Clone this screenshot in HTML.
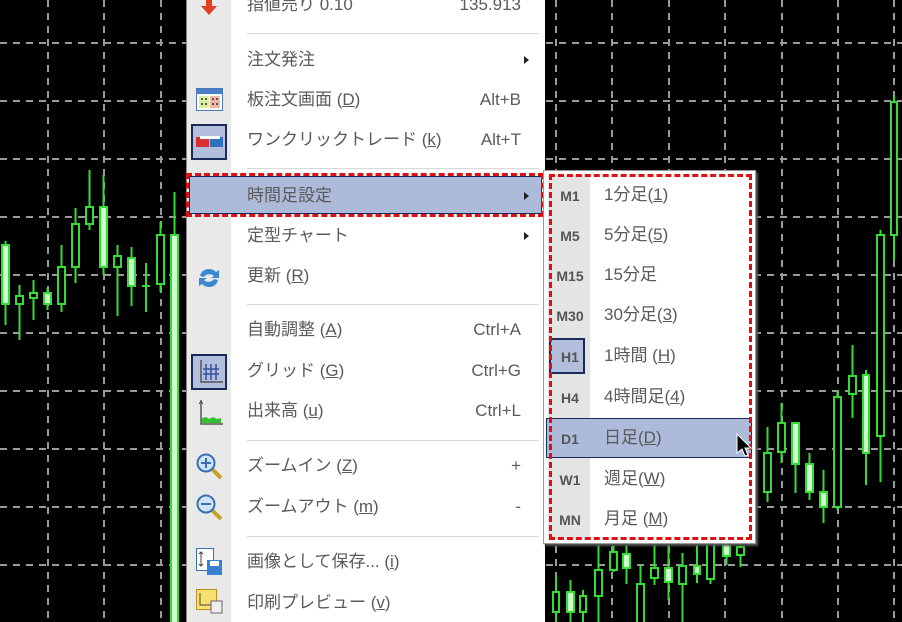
<!DOCTYPE html>
<html><head><meta charset="utf-8"><style>
*{margin:0;padding:0;box-sizing:border-box}
html{width:902px;height:622px;overflow:hidden}
body{width:902px;height:622px;background:#000;position:relative;overflow:hidden;font-family:"Liberation Sans","Noto Sans CJK JP",sans-serif}
.menu{position:absolute;left:186px;top:-10px;width:359px;height:632px;background:#fff;border-left:1px solid #888}
.icol{position:absolute;left:0;top:0;width:44px;height:100%;background:#e9e9e9}
.it{position:absolute;left:60px;font-size:17px;color:#5a5a5a;line-height:20px;white-space:nowrap}
.sc{position:absolute;right:24px;font-size:17px;color:#5a5a5a;line-height:20px}
.ar{position:absolute;right:16px;width:0;height:0;border-top:4px solid transparent;border-bottom:4px solid transparent;border-left:5px solid #222}
.sep{position:absolute;left:60px;right:6px;height:1px;background:#d8d8d8}
u{text-decoration:underline}
.sub{position:absolute;left:543px;top:170px;width:213px;height:374px;background:#fff;border:1px solid #999;box-shadow:2px 2px 2px #555}
.scol{position:absolute;left:4px;top:4px;width:42px;height:364px;background:#e4e4e4}
.lab{position:absolute;left:6px;width:40px;text-align:center;font-size:14px;font-weight:bold;color:#555}
.st{position:absolute;left:60px;font-size:17px;color:#5a5a5a;line-height:20px;white-space:nowrap}
</style></head><body>
<svg width="902" height="622" style="position:absolute;left:0;top:0">
<g stroke="#9a9a9a" stroke-width="2" stroke-dasharray="7,6">
<line x1="0" y1="43" x2="902" y2="43"/><line x1="0" y1="101" x2="902" y2="101"/><line x1="0" y1="159" x2="902" y2="159"/><line x1="0" y1="217" x2="902" y2="217"/><line x1="0" y1="275" x2="902" y2="275"/><line x1="0" y1="333" x2="902" y2="333"/><line x1="0" y1="391" x2="902" y2="391"/><line x1="0" y1="449" x2="902" y2="449"/><line x1="0" y1="507" x2="902" y2="507"/><line x1="0" y1="565" x2="902" y2="565"/>
<line x1="48" y1="0" x2="48" y2="622"/><line x1="104" y1="0" x2="104" y2="622"/><line x1="161" y1="0" x2="161" y2="622"/><line x1="556" y1="0" x2="556" y2="622"/><line x1="612" y1="0" x2="612" y2="622"/><line x1="669" y1="0" x2="669" y2="622"/><line x1="725" y1="0" x2="725" y2="622"/><line x1="782" y1="0" x2="782" y2="622"/><line x1="838" y1="0" x2="838" y2="622"/><line x1="894" y1="0" x2="894" y2="622"/>
</g>
<g stroke="#33dd33" stroke-width="2">
<line x1="5.5" y1="241" x2="5.5" y2="325"/><rect x="2" y="245" width="7" height="59" fill="#ccffcc"/>
<line x1="19.5" y1="285" x2="19.5" y2="340"/><rect x="16" y="296" width="7" height="8" fill="#000"/>
<line x1="33.5" y1="280" x2="33.5" y2="320"/><rect x="30" y="293" width="7" height="5" fill="#000"/>
<line x1="47.5" y1="288" x2="47.5" y2="310"/><rect x="44" y="293" width="7" height="11" fill="#ccffcc"/>
<line x1="61.5" y1="245" x2="61.5" y2="312"/><rect x="58" y="267" width="7" height="37" fill="#000"/>
<line x1="75.5" y1="208" x2="75.5" y2="283"/><rect x="72" y="224" width="7" height="43" fill="#000"/>
<line x1="89.5" y1="170" x2="89.5" y2="230"/><rect x="86" y="207" width="7" height="17" fill="#000"/>
<line x1="103.5" y1="175" x2="103.5" y2="275"/><rect x="100" y="207" width="7" height="60" fill="#ccffcc"/>
<line x1="117.5" y1="245" x2="117.5" y2="316"/><rect x="114" y="256" width="7" height="11" fill="#000"/>
<line x1="131.5" y1="247" x2="131.5" y2="306"/><rect x="128" y="258" width="7" height="28" fill="#ccffcc"/>
<line x1="146" y1="263" x2="146" y2="312"/><line x1="142" y1="286" x2="150" y2="286"/>
<line x1="160.5" y1="222" x2="160.5" y2="292"/><rect x="157" y="235" width="7" height="49" fill="#000"/>
<line x1="174.5" y1="192" x2="174.5" y2="622"/><rect x="171" y="235" width="7" height="400" fill="#ccffcc"/>
<line x1="767.5" y1="427" x2="767.5" y2="502"/><rect x="764" y="453" width="7" height="39" fill="#000"/>
<line x1="781.5" y1="403" x2="781.5" y2="463"/><rect x="778" y="423" width="7" height="29" fill="#000"/>
<line x1="795.5" y1="423" x2="795.5" y2="493"/><rect x="792" y="423" width="7" height="41" fill="#ccffcc"/>
<line x1="809.5" y1="453" x2="809.5" y2="500"/><rect x="806" y="464" width="7" height="28" fill="#ccffcc"/>
<line x1="823.5" y1="470" x2="823.5" y2="523"/><rect x="820" y="492" width="7" height="15" fill="#ccffcc"/>
<line x1="837.5" y1="390" x2="837.5" y2="510"/><rect x="834" y="397" width="7" height="110" fill="#000"/>
<line x1="852.5" y1="345" x2="852.5" y2="418"/><rect x="849" y="376" width="7" height="18" fill="#000"/>
<line x1="866" y1="370" x2="866" y2="485"/><rect x="863" y="375" width="6" height="78" fill="#ccffcc"/>
<line x1="880.5" y1="230" x2="880.5" y2="482"/><rect x="877" y="235" width="7" height="201" fill="#000"/>
<line x1="894" y1="95" x2="894" y2="260"/><rect x="891" y="102" width="6" height="133" fill="#000"/>
<line x1="556" y1="575" x2="556" y2="622"/><rect x="553" y="592" width="6" height="20" fill="#000"/>
<line x1="570.5" y1="580" x2="570.5" y2="622"/><rect x="567" y="592" width="7" height="20" fill="#ccffcc"/>
<line x1="583" y1="590" x2="583" y2="622"/><rect x="580" y="596" width="6" height="16" fill="#000"/>
<line x1="598.5" y1="545" x2="598.5" y2="622"/><rect x="595" y="570" width="7" height="26" fill="#000"/>
<line x1="613.5" y1="545" x2="613.5" y2="572"/><rect x="610" y="552" width="7" height="18" fill="#000"/>
<line x1="626.5" y1="545" x2="626.5" y2="584"/><rect x="623" y="554" width="7" height="14" fill="#ccffcc"/>
<line x1="640.5" y1="565" x2="640.5" y2="622"/><rect x="637" y="584" width="7" height="40" fill="#000"/>
<line x1="654.5" y1="545" x2="654.5" y2="585"/><rect x="651" y="568" width="7" height="10" fill="#000"/>
<line x1="668.5" y1="545" x2="668.5" y2="600"/><rect x="665" y="568" width="7" height="14" fill="#ccffcc"/>
<line x1="682.5" y1="553" x2="682.5" y2="622"/><rect x="679" y="566" width="7" height="18" fill="#000"/>
<line x1="697" y1="545" x2="697" y2="583"/><rect x="694" y="566" width="6" height="8" fill="#ccffcc"/>
<line x1="710.5" y1="545" x2="710.5" y2="584"/><rect x="707" y="540" width="7" height="39" fill="#000"/>
<line x1="726.5" y1="545" x2="726.5" y2="565"/><rect x="723" y="540" width="7" height="16" fill="#ccffcc"/>
<line x1="740.5" y1="545" x2="740.5" y2="567"/><rect x="737" y="547" width="7" height="8" fill="#000"/>
</g>
</svg>

<div class="menu">
<div class="icol"></div>
<svg style="position:absolute;left:12px;top:10px" width="20" height="16"><path d="M7 0h6v6h5l-8 9l-8-9h5z" fill="#e04020"/></svg>
<div class="it" style="top:5px">指値売り 0.10</div><div class="sc" style="top:5px">135.913</div>
<div class="sep" style="top:43px"></div>
<div class="it" style="top:60px">注文発注</div><div class="ar" style="top:66px"></div>
<svg style="position:absolute;left:9px;top:98px" width="27" height="24"><rect x="0.5" y="0.5" width="26" height="22" fill="#fff" stroke="#4a7ab8"/><rect x="1" y="1" width="25" height="5" fill="#4a80c8"/><rect x="3" y="8" width="10" height="12" fill="#d8f0a0"/><rect x="14" y="8" width="10" height="12" fill="#f0b8a8"/><g fill="#555"><rect x="5" y="10" width="2" height="2"/><rect x="9" y="10" width="2" height="2"/><rect x="5" y="15" width="2" height="2"/><rect x="9" y="15" width="2" height="2"/><rect x="16" y="10" width="2" height="2"/><rect x="20" y="10" width="2" height="2"/><rect x="16" y="15" width="2" height="2"/><rect x="20" y="15" width="2" height="2"/></g></svg>
<div class="it" style="top:100px">板注文画面 (<u>D</u>)</div><div class="sc" style="top:100px">Alt+B</div>
<div style="position:absolute;left:4px;top:134px;width:36px;height:36px;background:#b3bedc;border:2px solid #1a2a5a"></div>
<svg style="position:absolute;left:9px;top:144px" width="27" height="14"><rect x="0" y="3" width="13" height="10" fill="#d83030"/><rect x="14" y="3" width="13" height="10" fill="#3070c0"/><rect x="4" y="2" width="20" height="3" fill="#fff"/></svg>
<div class="it" style="top:140px">ワンクリックトレード (<u>k</u>)</div><div class="sc" style="top:140px">Alt+T</div>
<div class="sep" style="top:178px"></div>
<div style="position:absolute;left:2px;top:186px;width:353px;height:38px;background:#aebad9;border:1px solid #1a2a5a"></div>
<div style="position:absolute;left:-1px;top:183px;width:358px;height:44px;border:3px dashed #dd1111"></div>
<div class="it" style="top:196px">時間足設定</div><div class="ar" style="top:202px"></div>
<div class="it" style="top:236px">定型チャート</div><div class="ar" style="top:242px"></div>
<svg style="position:absolute;left:9px;top:275px" width="26" height="26"><path d="M4 11a9 8 0 0 1 16-4l3-2v8h-8l3-2a6 5 0 0 0-10 1z" fill="#3a88d0"/><path d="M22 15a9 8 0 0 1-16 4l-3 2v-8h8l-3 2a6 5 0 0 0 10-1z" fill="#3a88d0"/></svg>
<div class="it" style="top:276px">更新 (<u>R</u>)</div>
<div class="sep" style="top:314px"></div>
<div class="it" style="top:330px">自動調整 (<u>A</u>)</div><div class="sc" style="top:330px">Ctrl+A</div>
<div style="position:absolute;left:4px;top:364px;width:36px;height:36px;background:#b3bedc;border:2px solid #1a2a5a"></div>
<svg style="position:absolute;left:10px;top:370px" width="26" height="26" stroke="#555" stroke-width="1.5" fill="none"><path d="M4 0v22h22"/><path d="M9 4v16M14 4v16M19 4v16M6 9h16M6 14h16" stroke="#3050a0"/></svg>
<div class="it" style="top:371px">グリッド (<u>G</u>)</div><div class="sc" style="top:371px">Ctrl+G</div>
<svg style="position:absolute;left:9px;top:410px" width="28" height="26"><path d="M5 0v24h22" stroke="#555" stroke-width="1.5" fill="none"/><path d="M3 4l2-3l2 3" stroke="#555" fill="none"/><path d="M6 23v-5l4-1l3 2l4-2l4 2l4-1v5z" fill="#30c030"/></svg>
<div class="it" style="top:411px">出来高 (<u>u</u>)</div><div class="sc" style="top:411px">Ctrl+L</div>
<div class="sep" style="top:450px"></div>
<svg style="position:absolute;left:8px;top:462px" width="30" height="30"><path d="M17 17l9 9" stroke="#c8a020" stroke-width="4"/><circle cx="11" cy="11" r="8.5" fill="#cfe4f8" stroke="#3a70b0" stroke-width="2"/><path d="M6 11h10M11 6v10" stroke="#3a70b0" stroke-width="2"/></svg>
<div class="it" style="top:466px">ズームイン (<u>Z</u>)</div><div class="sc" style="top:466px">+</div>
<svg style="position:absolute;left:8px;top:503px" width="30" height="30"><path d="M17 17l9 9" stroke="#c8a020" stroke-width="4"/><circle cx="11" cy="11" r="8.5" fill="#cfe4f8" stroke="#3a70b0" stroke-width="2"/><path d="M6 11h10" stroke="#3a70b0" stroke-width="2"/></svg>
<div class="it" style="top:507px">ズームアウト (<u>m</u>)</div><div class="sc" style="top:507px">-</div>
<div class="sep" style="top:546px"></div>
<svg style="position:absolute;left:9px;top:558px" width="30" height="30"><rect x="0.5" y="0.5" width="17" height="22" fill="#fff" stroke="#3a70b0"/><path d="M5 4v14M3 6l2-2l2 2M3 16l2 2l2-2" stroke="#444" fill="none"/><rect x="11" y="12" width="15" height="15" fill="#3a80d0"/><rect x="14" y="13" width="9" height="5" fill="#fff"/></svg>
<div class="it" style="top:562px">画像として保存... (<u>i</u>)</div>
<svg style="position:absolute;left:9px;top:599px" width="30" height="30"><rect x="0.5" y="0.5" width="20" height="20" fill="#f8e070" stroke="#b89020"/><path d="M4 4v12h12" stroke="#444" fill="none"/><rect x="15" y="12" width="11" height="12" fill="#eee" stroke="#666"/></svg>
<div class="it" style="top:603px">印刷プレビュー (<u>v</u>)</div>
</div>

<div class="sub">
<div class="scol"></div>
<div style="position:absolute;left:5px;top:167px;width:36px;height:36px;background:#b3bedc;border:2px solid #1a2a5a"></div>
<div style="position:absolute;left:2px;top:247px;width:206px;height:40px;background:#aebad9;border:1px solid #1a2a5a"></div>
<div style="position:absolute;left:5px;top:3px;width:203px;height:366px;border:3px dashed #dd1111"></div>
<div class="lab" style="top:17px">M1</div><div class="st" style="top:14px">1分足(<u>1</u>)</div>
<div class="lab" style="top:57px">M5</div><div class="st" style="top:54px">5分足(<u>5</u>)</div>
<div class="lab" style="top:97px">M15</div><div class="st" style="top:94px">15分足</div>
<div class="lab" style="top:137px">M30</div><div class="st" style="top:134px">30分足(<u>3</u>)</div>
<div class="lab" style="top:178px">H1</div><div class="st" style="top:175px">1時間 (<u>H</u>)</div>
<div class="lab" style="top:219px">H4</div><div class="st" style="top:216px">4時間足(<u>4</u>)</div>
<div class="lab" style="top:260px">D1</div><div class="st" style="top:257px">日足(<u>D</u>)</div>
<div class="lab" style="top:301px">W1</div><div class="st" style="top:298px">週足(<u>W</u>)</div>
<div class="lab" style="top:341px">MN</div><div class="st" style="top:338px">月足 (<u>M</u>)</div>
<svg style="position:absolute;left:192px;top:262px" width="16" height="26"><path d="M1 1v19l5-4l3 7l3-1l-3-7h6z" fill="#000" stroke="#fff" stroke-width="1"/></svg>
</div>
</body></html>
